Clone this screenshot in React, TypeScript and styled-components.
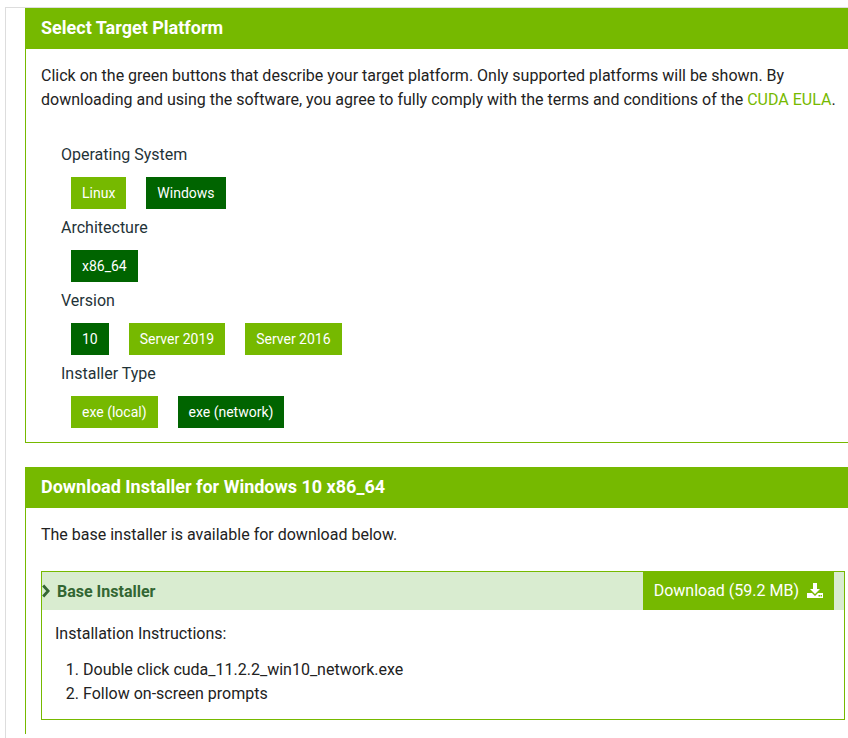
import React from 'react';
import styled, { createGlobalStyle } from 'styled-components';

const GREEN = '#76b900';
const DARK_GREEN = '#006400';

const GlobalStyle = createGlobalStyle`
  html, body {
    margin: 0;
    padding: 0;
    background: #fff;
  }
  body {
    font-family: Roboto, "Liberation Sans", sans-serif;
    color: #222;
  }
`;

const Frame = styled.div`
  margin: 7px 0 0 5px;
  border-top: 1px solid #ddd;
  border-left: 1px solid #ddd;
  padding-left: 19px;
  min-height: 740px;
  box-sizing: border-box;
`;

const Panel = styled.section<{ $closed?: boolean }>`
  border-left: 1px solid ${GREEN};
  border-bottom: ${(p) => (p.$closed ? `1px solid ${GREEN}` : 'none')};
  margin-bottom: 24px;
`;

const PanelHeader = styled.h2`
  margin: 0;
  height: 41px;
  box-sizing: border-box;
  display: flex;
  align-items: center;
  padding: 0 0 3px 15px;
  background: ${GREEN};
  color: #fff;
  font-size: 18px;
  font-weight: 700;
`;

const PanelBody = styled.div`
  padding: 15px 3px 14px 15px;
`;

const Intro = styled.p`
  margin: 0;
  font-size: 16px;
  line-height: 24px;
  color: #222;
`;

const EulaLink = styled.a`
  color: ${GREEN};
  text-decoration: none;
`;

const Options = styled.div`
  margin-top: 32px;
  padding-left: 20px;
`;

const Group = styled.div`
  margin-bottom: 8px;
  &:last-child {
    margin-bottom: 0;
  }
`;

const GroupLabel = styled.div`
  font-size: 16px;
  line-height: 22px;
  color: #1f3338;
`;

const ButtonRow = styled.div`
  display: flex;
  gap: 20px;
  margin-top: 11px;
  padding-left: 10px;
`;

const OptionButton = styled.button<{ $active?: boolean }>`
  height: 32px;
  padding: 0 11px;
  border: none;
  background: ${(p) => (p.$active ? DARK_GREEN : GREEN)};
  color: #fff;
  font-family: inherit;
  font-size: 14px;
  cursor: pointer;
`;

const InstallerBox = styled.div`
  margin-top: 24px;
  border: 1px solid ${GREEN};
`;

const InstallerHeader = styled.div`
  display: flex;
  align-items: stretch;
  justify-content: space-between;
  height: 38px;
  background: #d9ecd0;
  padding-right: 10px;
`;

const InstallerTitle = styled.div`
  display: flex;
  align-items: center;
  gap: 7px;
  color: #336633;
  font-size: 16px;
  font-weight: 700;
`;

const DownloadButton = styled.a`
  display: flex;
  align-items: center;
  gap: 8px;
  margin-top: -1px;
  height: 39px;
  padding: 0 11px 0 11px;
  background: ${GREEN};
  color: #fff;
  font-size: 16px;
  text-decoration: none;
`;

const InstallerBody = styled.div`
  padding: 12px 13px 13px 13px;
  font-size: 16px;
  line-height: 24px;
  color: #222;
`;

const StepList = styled.ol`
  margin: 12px 0 0 0;
  padding-left: 28px;
`;

const Chevron = () => (
  <svg width="8" height="14" viewBox="0 0 8 14">
    <path d="M1.2 1.5 L6.2 7 L1.2 12.5" fill="none" stroke="#336633" strokeWidth="2.8" />
  </svg>
);

const DownloadIcon = () => (
  <svg width="16" height="15" viewBox="0 0 16 15">
    <path d="M6 0 H10 V6 H13 L8 11 L3 6 H6 Z" fill="#fff" />
    <path d="M0 10 H5 L8 13 L11 10 H16 V15 H0 Z" fill="#fff" />
    <rect x="11.5" y="12" width="1.5" height="1.5" fill={GREEN} />
    <rect x="13.5" y="12" width="1.5" height="1.5" fill={GREEN} />
  </svg>
);

const groups = [
  { label: 'Operating System', options: ['Linux', 'Windows'], active: 'Windows' },
  { label: 'Architecture', options: ['x86_64'], active: 'x86_64' },
  { label: 'Version', options: ['10', 'Server 2019', 'Server 2016'], active: '10' },
  { label: 'Installer Type', options: ['exe (local)', 'exe (network)'], active: 'exe (network)' },
];

export default function App() {
  return (
    <>
      <GlobalStyle />
      <Frame>
        <Panel $closed>
          <PanelHeader>Select Target Platform</PanelHeader>
          <PanelBody>
            <Intro>
              Click on the green buttons that describe your target platform. Only supported platforms will be shown. By
              downloading and using the software, you agree to fully comply with the terms and conditions of the{' '}
              <EulaLink href="#">CUDA EULA</EulaLink>.
            </Intro>
            <Options>
              {groups.map((g) => (
                <Group key={g.label}>
                  <GroupLabel>{g.label}</GroupLabel>
                  <ButtonRow>
                    {g.options.map((o) => (
                      <OptionButton key={o} $active={o === g.active}>
                        {o}
                      </OptionButton>
                    ))}
                  </ButtonRow>
                </Group>
              ))}
            </Options>
          </PanelBody>
        </Panel>
        <Panel>
          <PanelHeader>Download Installer for Windows 10 x86_64</PanelHeader>
          <PanelBody>
            <Intro>The base installer is available for download below.</Intro>
            <InstallerBox>
              <InstallerHeader>
                <InstallerTitle>
                  <Chevron />
                  Base Installer
                </InstallerTitle>
                <DownloadButton href="#">
                  Download (59.2 MB)
                  <DownloadIcon />
                </DownloadButton>
              </InstallerHeader>
              <InstallerBody>
                Installation Instructions:
                <StepList>
                  <li>Double click cuda_11.2.2_win10_network.exe</li>
                  <li>Follow on-screen prompts</li>
                </StepList>
              </InstallerBody>
            </InstallerBox>
          </PanelBody>
        </Panel>
      </Frame>
    </>
  );
}
